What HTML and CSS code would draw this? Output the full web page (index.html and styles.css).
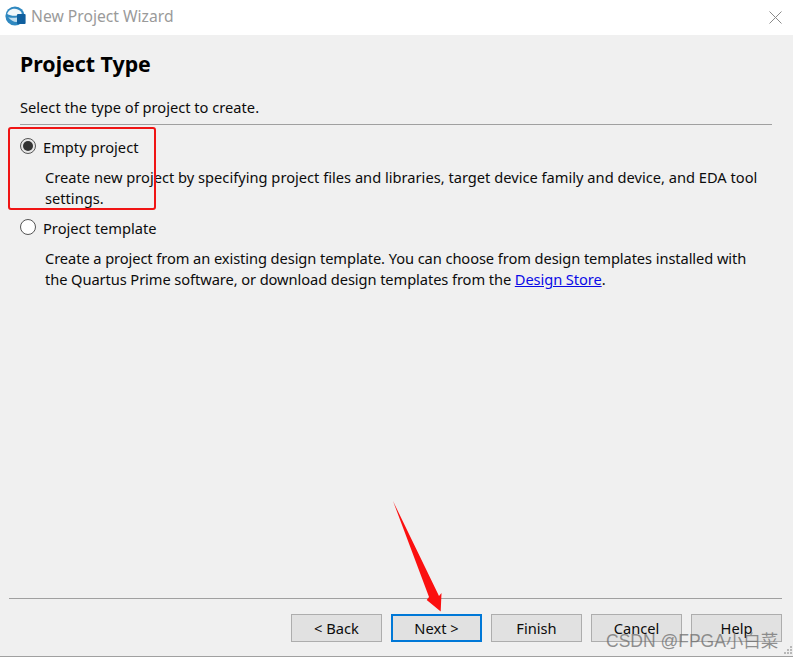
FILE: index.html
```html
<!DOCTYPE html>
<html lang="en">
<head>
<meta charset="utf-8">
<title>New Project Wizard</title>
<link rel="stylesheet" href="styles.css">
</head>
<body>
<div class="window">
  <header class="titlebar">
    <svg class="app-icon" width="21" height="20" viewBox="0 0 21 20">
      <circle cx="10" cy="10" r="9.6" fill="#2f88c0"/>
      <path d="M2.2 8C3.5 3.8 8.5 1.8 12.8 3.4C15.8 4.5 17.2 6.6 16.6 8L12 9.6C8.5 10.2 5 9.6 2.2 8Z" fill="#f2f7fa"/>
      <path d="M3.2 11.2C6 14.8 10 16.4 12.5 15.8L12 11.4C9 12 6 12 3.2 11.2Z" fill="#c2deee"/>
      <rect x="12" y="8" width="8.6" height="10" rx="1" fill="#0f5f9e"/>
    </svg>
    <span class="title">New Project Wizard</span>
    <svg class="close" width="13" height="13" viewBox="0 0 13 13">
      <path d="M.5.5L12.5 12.5M12.5.5L.5 12.5" stroke="#8a8a8a" stroke-width="1" fill="none"/>
    </svg>
  </header>
  <main class="content">
    <h1 class="heading">Project Type</h1>
    <p class="intro">Select the type of project to create.</p>
    <hr class="rule">
    <label class="option">
      <span class="radio radio-on"></span>
      <span>Empty project</span>
    </label>
    <p class="desc">Create new project by specifying project files and libraries, target device family and device, and EDA tool settings.</p>
    <label class="option option-second">
      <span class="radio"></span>
      <span>Project template</span>
    </label>
    <p class="desc desc-tight">Create a project from an existing design template. You can choose from design templates installed with the Quartus Prime software, or download design templates from the <a class="link" href="#">Design Store</a>.</p>
  </main>
  <footer class="footer">
    <hr class="rule">
    <div class="buttons">
      <button class="btn" type="button">&lt; Back</button>
      <button class="btn btn-default" type="button">Next &gt;</button>
      <button class="btn" type="button">Finish</button>
      <button class="btn" type="button">Cancel</button>
      <button class="btn" type="button">Help</button>
    </div>
  </footer>
  <div class="bottom-edge"></div>
  <div class="highlight"></div>
  <svg class="arrow" width="60" height="115" viewBox="0 0 60 115">
    <path d="M3 1L49 96L51.5 93L50.7 111.5L36.7 100L39 97Z" fill="#fb1010"/>
  </svg>
  <div class="watermark">CSDN @FPGA小白菜</div>
  <svg class="grip" width="10" height="10" viewBox="0 0 10 10">
    <path d="M7 1h2v2h-2zM4 4h2v2h-2zM7 4h2v2h-2zM1 7h2v2h-2zM4 7h2v2h-2zM7 7h2v2h-2z" fill="#b8b8b8"/>
  </svg>
</div>
</body>
</html>
```
FILE: styles.css
```css
* { box-sizing: border-box; }
html, body { margin: 0; padding: 0; }
body {
  width: 793px;
  height: 659px;
  overflow: hidden;
  background: #f0f0f0;
  font-family: "Noto Sans", "Open Sans", sans-serif;
  font-size: 14.67px;
  color: #0c0c0c;
}
.window {
  position: relative;
  width: 793px;
  height: 659px;
  display: flex;
  flex-direction: column;
}
.titlebar {
  height: 35px;
  flex: none;
  background: #fff;
  display: flex;
  align-items: center;
  padding: 0 11px 3px 5px;
}
.app-icon { flex: none; }
.title {
  margin-left: 5px;
  font-size: 15.67px;
  color: #9a9a9a;
  flex: 1;
}
.close { flex: none; margin-top: 3px; }
.content {
  flex: 1;
  padding: 0 21px 0 20px;
}
.heading {
  margin: 14px 0 0;
  font-size: 21.33px;
  line-height: 30px;
  font-weight: 700;
  color: #000;
}
.intro {
  margin: 18px 0 0;
  line-height: 20px;
}
.rule {
  margin: 0;
  border: 0;
  height: 1px;
  background: #a0a0a0;
}
.content .rule { margin-top: 7px; }
.option {
  display: flex;
  align-items: center;
  gap: 7px;
  margin-top: 11px;
  line-height: 22px;
}
.option-second { margin-top: 8px; }
.radio {
  width: 16px;
  height: 16px;
  flex: none;
  border: 1px solid #555;
  border-radius: 50%;
  background: #fff;
  position: relative;
  margin-top: -2px;
}
.radio-on { background: #e6e6e6; }
.radio-on::after {
  content: "";
  position: absolute;
  inset: 2px;
  border-radius: 50%;
  background: #333;
}
.desc {
  margin: 9px 0 0 25px;
  line-height: 21px;
  width: 720px;
}
.desc-tight { letter-spacing: -0.085px; }
.link { color: #0a0ae6; text-decoration: underline; }
.footer {
  flex: none;
  padding: 0 11px 0 9px;
}
.buttons {
  display: flex;
  justify-content: flex-end;
  gap: 9px;
  margin-top: 15px;
  margin-bottom: 14px;
}
.btn {
  width: 91px;
  height: 28px;
  padding: 0;
  border: 1px solid #adadad;
  background: #e1e1e1;
  font: inherit;
  color: #0c0c0c;
}
.btn-default {
  border: 2px solid #0078d7;
}
.bottom-edge {
  flex: none;
  height: 3px;
  border-top: 1px solid #a0a0a0;
  background: #fff;
}
.highlight {
  position: absolute;
  left: 8px;
  top: 127px;
  width: 148px;
  height: 83px;
  border: 2.5px solid #f01414;
  border-radius: 3px;
}
.arrow {
  position: absolute;
  left: 390px;
  top: 500px;
}
.watermark {
  position: absolute;
  left: 606px;
  top: 629px;
  font-size: 17.5px;
  line-height: 24px;
  color: rgba(110, 110, 110, 0.75);
  font-family: "Liberation Sans", "Noto Sans CJK SC", sans-serif;
  white-space: nowrap;
}
.grip {
  position: absolute;
  left: 783px;
  top: 645px;
}
```
